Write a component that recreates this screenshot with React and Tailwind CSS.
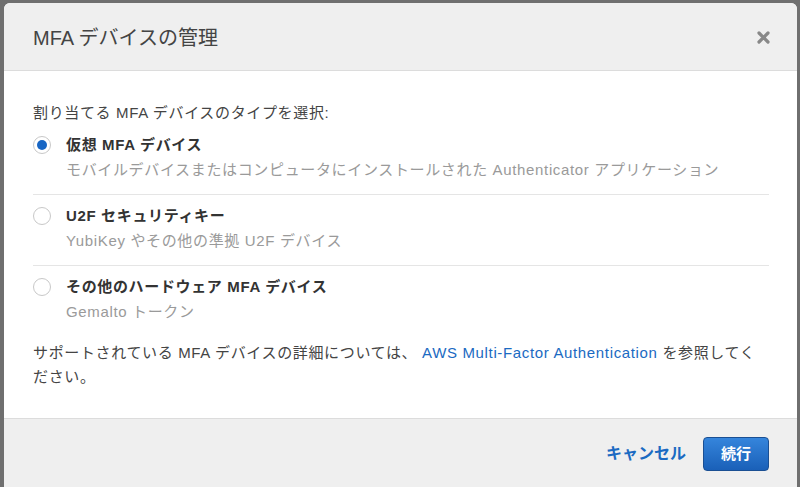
import React, { useState } from 'react';

const font = { fontFamily: "'Liberation Sans', 'Noto Sans CJK JP', sans-serif" };

const options = [
  { id: 'virtual', label: '仮想 MFA デバイス', desc: 'モバイルデバイスまたはコンピュータにインストールされた Authenticator アプリケーション' },
  { id: 'u2f', label: 'U2F セキュリティキー', desc: 'YubiKey やその他の準拠 U2F デバイス' },
  { id: 'hardware', label: 'その他のハードウェア MFA デバイス', desc: 'Gemalto トークン' },
];

export default function App() {
  const [selected, setSelected] = useState('virtual');

  return (
    <div className="w-[800px] h-[487px] overflow-hidden bg-[#6f6f6f] pt-[3px] pl-[4px]" style={font}>
      <div className="w-[793px] h-[600px] bg-white rounded-t-[6px] overflow-hidden flex flex-col">
        {/* Header */}
        <div className="h-[68px] bg-[#efefef] border-b border-[#dcdcdc] flex items-center justify-between pl-[29px] pr-[27px]">
          <h1 className="text-[20px] text-[#444] font-normal pt-[2px]">MFA デバイスの管理</h1>
          <button className="text-[#888] mt-[2px]">
            <svg width="13" height="13" viewBox="0 0 13 13">
              <path d="M2 2 L11 11 M11 2 L2 11" stroke="currentColor" strokeWidth="3.2" strokeLinecap="round" />
            </svg>
          </button>
        </div>

        {/* Body */}
        <div className="pl-[29px] pr-[28px] pt-[32px] pb-[29px] text-[15px] tracking-[0.65px] text-[#444]">
          <p className="leading-[20px]">割り当てる MFA デバイスのタイプを選択:</p>
          <div className="mt-[1px]">
            {options.map((o, i) => (
              <label
                key={o.id}
                className={`flex items-start gap-[15px] pt-[11px] pb-[14px] cursor-pointer ${i > 0 ? 'border-t border-[#e5e5e5]' : ''}`}
                onClick={() => setSelected(o.id)}
              >
                <span className="mt-[1px] w-[18px] h-[18px] rounded-full border border-[#c8c8c8] bg-white flex items-center justify-center shrink-0">
                  {selected === o.id && <span className="w-[10px] h-[10px] rounded-full bg-[#1866c4]" />}
                </span>
                <span className="flex flex-col">
                  <span className="leading-[20px] font-bold text-[#333]">{o.label}</span>
                  <span className="leading-[20px] mt-[5px] text-[#9a9a9a]">{o.desc}</span>
                </span>
              </label>
            ))}
          </div>
          <p className="mt-[5px] leading-[24px]">
            サポートされている MFA デバイスの詳細については、 <a href="#" className="text-[#1b6ac2]">AWS Multi-Factor Authentication</a> を参照してく<br />ださい。
          </p>
        </div>

        {/* Footer */}
        <div className="flex-1 bg-[#efefef] border-t border-[#dcdcdc] flex justify-end items-start gap-[17px] pt-[18px] pr-[28px]">
          <button className="h-[34px] text-[16px] font-bold text-[#1b6ac2]">キャンセル</button>
          <button className="h-[34px] w-[66px] rounded-[4px] border border-[#1a4f93] bg-gradient-to-b from-[#3585dc] to-[#1a60b8] text-white text-[15px] font-bold">
            続行
          </button>
        </div>
      </div>
    </div>
  );
}
